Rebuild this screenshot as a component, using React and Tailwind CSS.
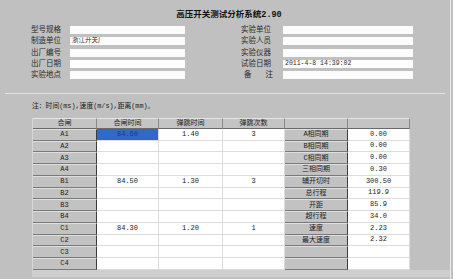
import React from 'react';

const leftFields = [
    { label: '型号规格', value: '' },
    { label: '制造单位', value: '浙江开关厂' },
    { label: '出厂编号', value: '' },
    { label: '出厂日期', value: '' },
    { label: '实验地点', value: '' },
];

const rightFields = [
    { label: '实验单位', value: '' },
    { label: '实验人员', value: '' },
    { label: '实验仪器', value: '' },
    { label: '试验日期', value: '2011-4-8 14:39:02' },
    { label: '备注', value: '', spread: true },
];

const rows = [
    { name: 'A1', close: '84.60', bounce: '1.40', count: '3', label: 'A相同期', value: '0.00' },
    { name: 'A2', close: '', bounce: '', count: '', label: 'B相同期', value: '0.00' },
    { name: 'A3', close: '', bounce: '', count: '', label: 'C相同期', value: '0.00' },
    { name: 'A4', close: '', bounce: '', count: '', label: '三相同期', value: '0.30' },
    { name: 'B1', close: '84.50', bounce: '1.30', count: '3', label: '辅开切时', value: '300.50' },
    { name: 'B2', close: '', bounce: '', count: '', label: '总行程', value: '119.9' },
    { name: 'B3', close: '', bounce: '', count: '', label: '开距', value: '85.9' },
    { name: 'B4', close: '', bounce: '', count: '', label: '超行程', value: '34.0' },
    { name: 'C1', close: '84.30', bounce: '1.20', count: '1', label: '速度', value: '2.23' },
    { name: 'C2', close: '', bounce: '', count: '', label: '最大速度', value: '2.32' },
    { name: 'C3', close: '', bounce: '', count: '', label: '', value: '' },
    { name: 'C4', close: '', bounce: '', count: '', label: '', value: '' },
];

const font = { fontFamily: '"Liberation Mono", "Noto Sans CJK SC", monospace' };

const FormRow = ({ label, value, spread, labelW, fieldW }) => (
    <div className="flex items-center h-[11.25px]">
        <div
            className={`${labelW} text-[7.5px] leading-[8px] text-[#2a2a2a] flex ${spread ? 'justify-between pl-[3px] pr-[10px]' : ''}`}
        >
            {spread ? (
                <>
                    <span>备</span>
                    <span>注</span>
                </>
            ) : (
                label
            )}
        </div>
        <div className={`${fieldW} h-[8px] bg-[#fcfcfc] text-[6.5px] leading-[8px] text-[#303030] pl-[2px] whitespace-nowrap overflow-hidden`}>
            {value}
        </div>
    </div>
);

const headCell = 'bg-[#c4c4c4] border-r border-b border-r-[#8a8a8a] border-b-[#6a6a6a] border-t border-t-[#e6e6e6] flex items-center justify-center';
const grayCell = 'bg-[#c2c2c2] border-r border-b border-r-[#3c3c3c] border-b-[#7a7a7a] border-t border-t-[#dedede] flex items-center justify-center';
const whiteCell = 'bg-white border-r border-b border-[#dcdcdc] flex items-center justify-center';

export default function App() {
    return (
        <div className="w-[453px] h-[279px] bg-[#c0c0c0] overflow-hidden flex text-[#222]" style={font}>
            <div className="w-[451px] h-full border-r border-[#e9e9e9] flex flex-col">
                <div className="pt-[10px] h-[21px] text-center text-[8.5px] leading-[11px] font-bold text-[#111] pl-[8px]">
                    高压开关测试分析系统2.90
                </div>

                <div className="flex mt-[3.5px]">
                    <div className="pl-[31px] flex flex-col">
                        {leftFields.map((f) => (
                            <FormRow key={f.label} {...f} labelW="w-[39px]" fieldW="w-[115px]" />
                        ))}
                    </div>
                    <div className="pl-[56px] flex flex-col">
                        {rightFields.map((f) => (
                            <FormRow key={f.label} {...f} labelW="w-[42px]" fieldW="w-[130px]" />
                        ))}
                    </div>
                </div>

                <div className="mt-[12px] mx-[5px] h-px bg-[#e2e2e2]" />

                <div className="mt-[8.5px] pl-[32px] h-[9px] text-[6.8px] leading-[9px] text-[#1a1a1a]">
                    注：时间(ms),速度(m/s),距离(mm)。
                </div>

                <div className="mt-[6.5px] ml-[32px] w-[377px] grid grid-cols-[64px_62px_64px_62px_63px_62px] grid-rows-[11px_repeat(12,11.75px)] text-[7px] leading-none text-[#222] border-l border-[#d6d6d6]">
                    <div className={headCell}>合闸</div>
                    <div className={headCell}>合闸时间</div>
                    <div className={headCell}>弹跳时间</div>
                    <div className={headCell}>弹跳次数</div>
                    <div className={`${headCell} border-r-[#3c3c3c]`}></div>
                    <div className={`${headCell} border-r-[#3c3c3c]`}></div>
                    {rows.map((r, i) => (
                        <React.Fragment key={r.name}>
                            <div className={grayCell}>{r.name}</div>
                            <div
                                className={
                                    i === 0
                                        ? 'bg-[#3369c6] border-r border-b border-[#dcdcdc] flex items-center justify-center text-[#1a3a80]'
                                        : whiteCell
                                }
                            >
                                {r.close}
                            </div>
                            <div className={whiteCell}>{r.bounce}</div>
                            <div className={whiteCell}>{r.count}</div>
                            <div className={grayCell}>{r.label}</div>
                            <div className={whiteCell}>{r.value}</div>
                        </React.Fragment>
                    ))}
                </div>

                <div className="ml-[32px] h-[7px] bg-[#cecece]" />
            </div>
        </div>
    );
}
